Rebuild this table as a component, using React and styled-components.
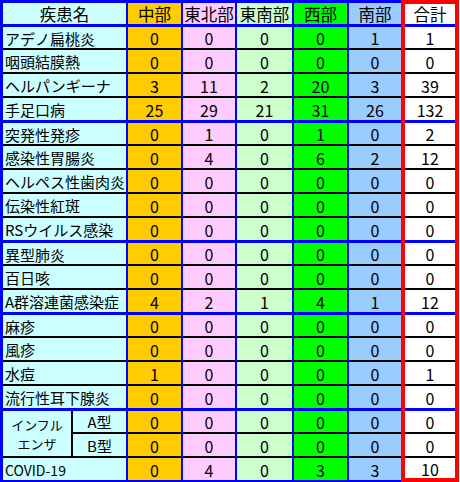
import React from "react";
import styled, { createGlobalStyle } from "styled-components";

const BLUE = "#0000ff";
const RED = "#ff0000";

const GlobalStyle = createGlobalStyle`
  html, body {
    margin: 0;
    padding: 0;
    background: #fff;
  }
  * {
    box-sizing: border-box;
  }
`;

const Sheet = styled.div`
  display: flex;
  flex-direction: row;
  width: 460px;
  height: 482px;
  background: #fff;
  font-family: "Noto Sans CJK JP", "Noto Sans", sans-serif;
  color: #000;
  overflow: hidden;
`;

const Column = styled.div`
  display: flex;
  flex-direction: column;
  width: ${(p) => p.$w}px;
  background: ${(p) => p.$bg};
  border-top: 3px solid ${BLUE};
  border-bottom: 2px solid ${BLUE};
  border-left: ${(p) => (p.$first ? `3px solid ${BLUE}` : "none")};
  border-right: ${(p) => (p.$end ? "none" : `2px solid ${BLUE}`)};
`;

const TotalColumn = styled.div`
  display: flex;
  flex-direction: column;
  width: 58px;
  height: 482px;
  background: #fff;
  border: 4px solid ${RED};
`;

const HeadCell = styled.div`
  height: ${(p) => (p.$short ? 20 : 21)}px;
  display: flex;
  align-items: center;
  justify-content: center;
  font-size: 16.5px;
  line-height: 1;
  padding-top: 1px;
  white-space: nowrap;
`;

const Cell = styled.div`
  height: ${(p) => p.$h || 24}px;
  flex-shrink: 0;
  display: flex;
  align-items: center;
  justify-content: ${(p) => (p.$left ? "flex-start" : "center")};
  padding-left: ${(p) => (p.$left ? "2px" : "0")};
  padding-top: 1px;
  border-top: ${(p) => (p.$blue ? `3px solid ${BLUE}` : "2px solid #000")};
  font-size: ${(p) => p.$size || 16}px;
  line-height: 1;
  white-space: nowrap;
`;

const FluBlock = styled.div`
  display: flex;
  flex-direction: row;
  height: 48px;
  border-top: 3px solid ${BLUE};
`;

const FluLabel = styled.div`
  width: 70px;
  display: flex;
  flex-direction: column;
  align-items: center;
  justify-content: center;
  border-right: 2px solid #000;
  font-size: 13px;
  line-height: 19px;
`;

const FluTypes = styled.div`
  flex: 1;
  display: flex;
  flex-direction: column;
`;

const FluType = styled.div`
  height: ${(p) => (p.$first ? 21 : 24)}px;
  display: flex;
  align-items: center;
  justify-content: center;
  border-top: ${(p) => (p.$first ? "none" : "2px solid #000")};
  font-size: 15px;
  line-height: 1;
`;

const zeros = [0, 0, 0, 0, 0, 0];

const rows = [
  { name: "アデノ扁桃炎", v: [0, 0, 0, 0, 1, 1], blue: true },
  { name: "咽頭結膜熱", v: zeros },
  { name: "ヘルパンギーナ", v: [3, 11, 2, 20, 3, 39] },
  { name: "手足口病", v: [25, 29, 21, 31, 26, 132] },
  { name: "突発性発疹", v: [0, 1, 0, 1, 0, 2], blue: true },
  { name: "感染性胃腸炎", v: [0, 4, 0, 6, 2, 12] },
  { name: "ヘルペス性歯肉炎", v: zeros },
  { name: "伝染性紅斑", v: zeros },
  { name: "RSウイルス感染", v: zeros },
  { name: "異型肺炎", v: zeros, blue: true },
  { name: "百日咳", v: zeros },
  { name: "A群溶連菌感染症", v: [4, 2, 1, 4, 1, 12] },
  { name: "麻疹", v: zeros, blue: true },
  { name: "風疹", v: zeros },
  { name: "水痘", v: [1, 0, 0, 0, 0, 1] },
  { name: "流行性耳下腺炎", v: zeros },
  { name: "A型", v: zeros, blue: true, flu: true },
  { name: "B型", v: zeros, flu: true },
  { name: "COVID-19", v: [0, 4, 0, 3, 3, 10], size: 14 },
];

const regions = [
  { label: "中部", bg: "#ffcc00", w: 55 },
  { label: "東北部", bg: "#ffccff", w: 54 },
  { label: "東南部", bg: "#ccffcc", w: 57 },
  { label: "西部", bg: "#00ff00", w: 55 },
  { label: "南部", bg: "#99ccff", w: 52, end: true },
];

const NameColumn = () => (
  <Column $w={128} $bg="#ccffff" $first>
    <HeadCell>疾患名</HeadCell>
    {rows.map((r, i) => {
      if (r.flu && r.name === "A型") {
        return (
          <FluBlock key={i}>
            <FluLabel>
              <span>インフル</span>
              <span>エンザ</span>
            </FluLabel>
            <FluTypes>
              <FluType $first>A型</FluType>
              <FluType>B型</FluType>
            </FluTypes>
          </FluBlock>
        );
      }
      if (r.flu) return null;
      return (
        <Cell key={i} $left $blue={r.blue} $size={r.size || 15}>
          {r.name}
        </Cell>
      );
    })}
  </Column>
);

export default function App() {
  return (
    <>
      <GlobalStyle />
      <Sheet>
        <NameColumn />
        {regions.map((c, ci) => (
          <Column key={c.label} $w={c.w} $bg={c.bg} $end={c.end}>
            <HeadCell>{c.label}</HeadCell>
            {rows.map((r, i) => (
              <Cell key={i} $blue={r.blue}>
                {r.v[ci]}
              </Cell>
            ))}
          </Column>
        ))}
        <TotalColumn>
          <HeadCell $short>合計</HeadCell>
          {rows.map((r, i) => (
            <Cell key={i} $blue={r.blue} $h={i === rows.length - 1 ? 22 : 24}>
              {r.v[5]}
            </Cell>
          ))}
        </TotalColumn>
      </Sheet>
    </>
  );
}
